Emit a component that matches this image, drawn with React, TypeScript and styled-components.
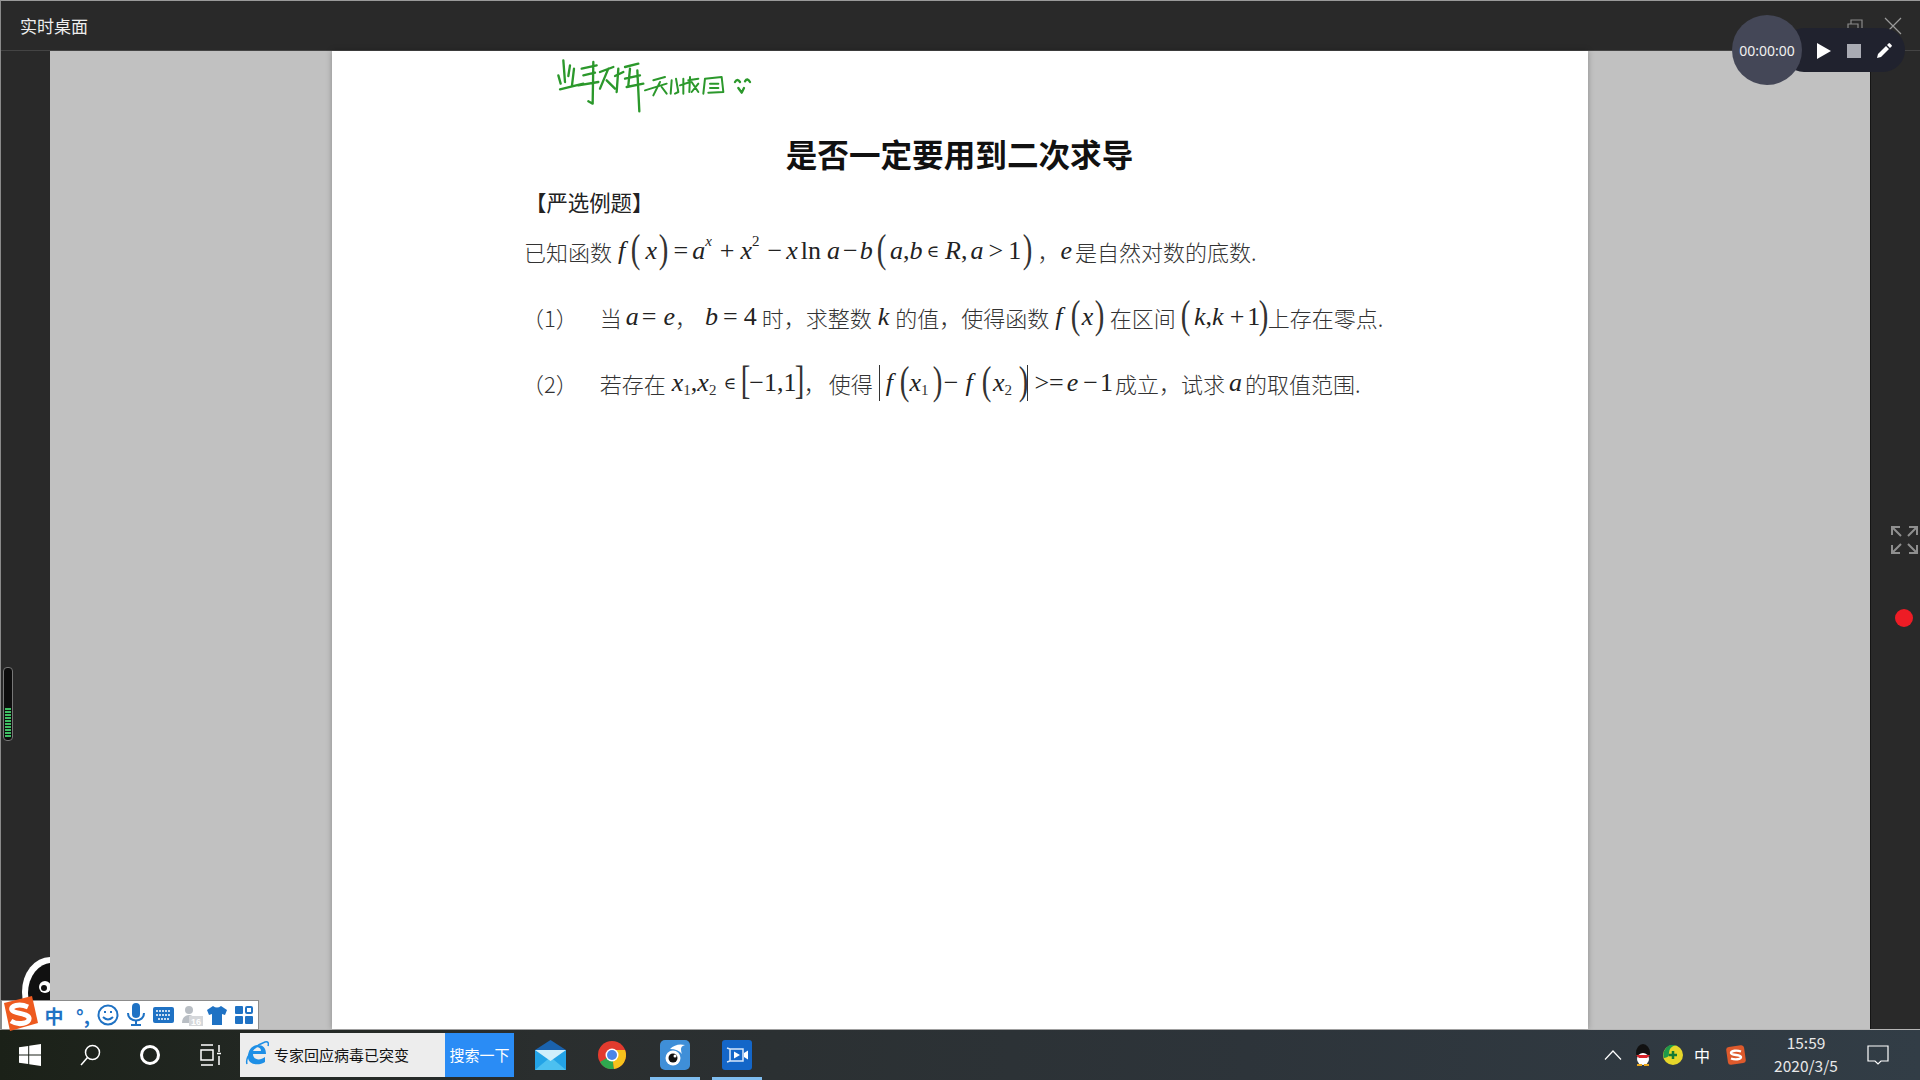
import React from 'react';
import styled, { createGlobalStyle } from 'styled-components';

const Global = createGlobalStyle`
  html, body { margin: 0; padding: 0; background: #292929; overflow: hidden; }
  #root { width: 1920px; height: 1080px; }
`;
const CJK = `"Noto Sans CJK SC", "Liberation Sans", sans-serif`;
const Screen = styled.div`position: relative; width: 1920px; height: 1080px; display: flex; flex-direction: column; overflow: hidden; font-family: ${CJK};`;
const Win = styled.div`height: 1030px; display: flex; flex-direction: column; background: #292929; border-top: 1px solid #9a9a9a; border-left: 1px solid #8a8a8a; border-bottom: 1px solid #b5b5b5; box-sizing: border-box;`;
const TitleBar = styled.div`height: 50px; flex: none; display: flex; align-items: center; padding-left: 19px; color: #eee; font-size: 17px; border-bottom: 1px solid #444; box-sizing: border-box;`;
const Body = styled.div`flex: 1; display: flex; min-height: 0;`;
const Rail = styled.div`width: 49px; flex: none; background: #292929;`;
const RightRail = styled.div`width: 50px; flex: none; background: #292929; border-left: 1px solid #151515; box-sizing: border-box;`;
const Viewer = styled.div`flex: 1; background: #c1c1c1; display: flex; justify-content: center; min-width: 0;`;
const Page = styled.div`width: 1256px; background: #fff; box-shadow: 0 0 6px rgba(0,0,0,.28); padding: 1px 0 0 192px; box-sizing: border-box; color: #222;`;
const Ink = styled.svg`display: block; width: 210px; height: 65px; margin-left: 26px;`;
const Title = styled.h1`margin: 14px 0 0; width: 870px; text-align: center; font-size: 31.6px; line-height: 44px; font-weight: 700; color: #111; padding-left: 1px; box-sizing: border-box;`;
const Tag = styled.div`margin: 10px 0 0 1px; font-size: 21.4px; line-height: 34px; color: #222;`;
const Line = styled.div<{ $top: number; $left?: number }>`
  display: flex; align-items: center; height: 44px; margin-top: ${p => p.$top}px; margin-left: ${p => p.$left ?? 0}px;
  white-space: nowrap; font-size: 22px; color: #333; font-weight: 300;
`;
const Gap = styled.span<{ $w: number }>`display: inline-block; flex: none; width: ${p => p.$w}px;`;
const I = styled.span<{ $g?: number }>`font-family: "Liberation Serif", serif; font-style: italic; font-size: 26px; color: #222; margin-left: ${p => p.$g ?? 0}px;`;
const R = styled.span<{ $g?: number }>`font-family: "Liberation Serif", serif; font-size: 26px; color: #222; margin-left: ${p => p.$g ?? 0}px;`;
const Elem = styled.span<{ $g?: number }>`font-family: "DejaVu Serif", serif; font-size: 17px; color: #222; margin-left: ${p => p.$g ?? 0}px;`;
const Big = styled.span<{ $g?: number; $r?: number }>`font-family: "Liberation Serif", serif; font-size: 40px; font-weight: 400; line-height: 40px; color: #333; display: inline-block; transform: scaleX(.72) translateY(-2px); margin: 0 ${p => p.$r ?? 0}px 0 ${p => p.$g ?? 0}px;`;
const Sup = styled.span<{ $g?: number; $i?: boolean }>`font-family: "Liberation Serif", serif; font-size: 15px; font-style: ${p => p.$i ? 'italic' : 'normal'}; color: #222; transform: translateY(-10px); margin-left: ${p => p.$g ?? 0}px;`;
const Sub = styled.span`font-family: "Liberation Serif", serif; font-size: 15px; color: #333; transform: translateY(7px);`;
const Bar = styled.span<{ $g?: number }>`display: inline-block; width: 1px; height: 36px; background: #333; margin-left: ${p => p.$g ?? 0}px;`;
const Task = styled.div`height: 50px; flex: none; display: flex; align-items: stretch; padding-right: 20px; background: linear-gradient(90deg, #1b2118 0%, #2a2e2e 28%, #2d343a 65%, #323d46 100%); color: #fff;`;
const TaskSlot = styled.div<{ $w: number; $on?: boolean }>`width: ${p => p.$w}px; flex: none; display: flex; align-items: center; justify-content: center; box-shadow: ${p => p.$on ? 'inset 0 -3px 0 #7fbdef' : 'none'};`;
const SearchBox = styled.div`width: 205px; margin: 3px 0; flex: none; display: flex; align-items: center; gap: 5px; background: #ededed; color: #111; font-size: 15px; padding: 0 0 2px 5px; box-sizing: border-box;`;
const SearchBtn = styled.div`width: 69px; margin: 3px 0; flex: none; background: #2a8cf5; color: #fff; font-size: 15px; display: flex; align-items: center; justify-content: center; padding-bottom: 2px; box-sizing: border-box;`;
const Spring = styled.div`flex: 1;`;
const Clock = styled.div`width: 100px; flex: none; text-align: center; font-size: 15.500px; line-height: 23px; color: #e8e8e8; align-self: center; padding-bottom: 2px; font-family: ${CJK};`;
const TrayZh = styled.span`font-size: 16px; color: #fff; font-family: ${CJK};`;
const Hud = styled.div`position: absolute; left: 1732px; top: 15px; height: 70px; width: 173px; display: flex; align-items: center;`;
const Pill = styled.div`position: absolute; left: 50px; top: 13px; width: 123px; height: 44px; border-radius: 22px; background: #20222e; display: flex; align-items: center; padding: 1px 0 0 35px; gap: 16px; box-sizing: border-box;`;
const Dial = styled.div`position: relative; z-index: 1; width: 70px; height: 70px; border-radius: 50%; background: #444757; color: #f0f0f0; font-size: 14px; display: flex; align-items: center; justify-content: center; padding-top: 1px; box-sizing: border-box; font-family: "Noto Sans", sans-serif;`;
const Stop = styled.span`width: 14px; height: 14px; background: #a9abb3;`;
const WinGlyph = styled.svg<{ $l: number }>`position: absolute; left: ${p => p.$l}px; top: 17px; width: 18px; height: 18px;`;
const Expand = styled.svg`position: absolute; left: 1891px; top: 526px; width: 27px; height: 28px;`;
const Rec = styled.div`position: absolute; left: 1895px; top: 609px; width: 18px; height: 18px; border-radius: 50%; background: #ee1c25;`;
const Meter = styled.div`position: absolute; left: 3px; top: 667px; width: 10px; height: 74px; border: 1px solid #777; border-radius: 4px; background: #0d0d0d; box-sizing: border-box; display: flex; flex-direction: column; justify-content: flex-end; gap: 1px; padding: 0 1px 3px;`;
const Tick = styled.span`height: 2px; background: #3fbf63; flex: none;`;
const Panda = styled.svg`position: absolute; left: 0; top: 950px; width: 50px; height: 60px;`;
const Ime = styled.div`position: absolute; left: 1px; top: 1000px; width: 258px; height: 30px; background: #fff; border: 1px solid #8c8c8c; box-sizing: border-box; display: flex; align-items: center;`;
const ImeS = styled.svg`position: absolute; left: 1px; top: 996px; width: 37px; height: 35px;`;
const ImeItem = styled.span<{ $x: number }>`position: absolute; left: ${p => p.$x}px; top: 2px; width: 26px; height: 24px; display: flex; align-items: center; justify-content: center; color: #1f72c4; font-size: 19px; font-weight: 700;`;

const Signature = () => (
  <Ink viewBox="0 0 630 195" fill="none" stroke="#2b982b" strokeWidth="7" strokeLinecap="round" strokeLinejoin="round" role="img" aria-label="手写签名">
    <path d="M40 25 45 90M25 70 32 95M60 40 55 72M30 112 100 95M72 50 66 100" />
    <path d="M95 50 140 40M130 30 128 155 115 148M85 100 145 90M100 70 135 62" />
    <path d="M150 60 190 45M175 50 150 110M170 85 195 110" />
    <path d="M205 50 200 120M195 72 220 60M262 55 268 178M225 45 265 35M225 80 270 70M230 105 280 95M240 50 235 100" />
    <path d="M285 115 350 95M310 85 345 75M330 90 310 130M335 105 350 125" strokeWidth="6" />
    <path d="M365 85 362 125M378 80 385 120 375 125M400 80 400 125M390 100 420 90M420 75 418 120M415 85 445 80M425 90 445 120M445 95 425 120" strokeWidth="6" />
    <path d="M465 80 460 125M465 80 515 75 520 120 475 122M480 95 505 95M480 108 505 108" strokeWidth="6" />
    <path d="M555 90Q562 78 570 90M585 88Q592 76 600 90M565 108 575 122 582 108" />
  </Ink>
);

const App = () => (
  <Screen>
    <Global />
    <Win>
      <TitleBar>实时桌面</TitleBar>
      <Body>
        <Rail />
        <Viewer>
          <Page>
            <Signature />
            <Title>是否一定要用到二次求导</Title>
            <Tag>【严选例题】</Tag>
            <Line $top={10}>
              已知函数<I $g={6}>f</I><Big $g={4}>(</Big><I $g={3}>x</I><Big>)</Big><R $g={3}>=</R><I $g={4}>a</I><Sup $i>x</Sup><R $g={8}>+</R><I $g={6}>x</I><Sup>2</Sup><R $g={8}>−</R><I $g={4}>x</I><R $g={3}>ln</R><I $g={6}>a</I><R $g={3}>−</R><I $g={2}>b</I><Big $g={2}>(</Big><I $g={2}>a</I><R>,</R><I>b</I><Elem $g={4}>∈</Elem><I $g={6}>R</I><R>,</R><I $g={3}>a</I><R $g={5}>&gt;</R><R $g={5}>1</R><Big>)</Big><Gap $w={3} />，<Gap $w={1} /><I>e</I><Gap $w={3} />是自然对数的底数.
            </Line>
            <Line $top={22} $left={-2}>
              （1）<Gap $w={22} />当<I $g={4}>a</I><R $g={3}>=</R><I $g={7}>e</I>，<Gap $w={8} /><I>b</I><R $g={5}>=</R><R $g={6}>4</R><Gap $w={5} />时，求整数<I $g={6}>k</I><Gap $w={6} />的值，使得函数<I $g={6}>f</I><Big $g={6}>(</Big><I>x</I><Big>)</Big><Gap $w={3} />在区间<Big $g={3}>(</Big><I $g={2}>k</I><R>,</R><I>k</I><R $g={6}>+</R><R $g={3}>1</R><Big $g={-3} $r={-3}>)</Big>上存在零点.
            </Line>
            <Line $top={22} $left={-2}>
              （2）<Gap $w={22} />若存在<I $g={6}>x</I><Sub>1</Sub><R>,</R><I>x</I><Sub>2</Sub><Elem $g={7}>∈</Elem><Big $g={3} $r={-3}>[</Big><R>−1,1</R><Big $g={-3} $r={-3}>]</Big>，<Gap $w={3} />使得<Bar $g={6} /><I $g={6}>f</I><Big $g={5} $r={-2}>(</Big><I>x</I><Sub>1</Sub><Big $g={3} $r={-2}>)</Big><R $g={1}>−</R><I $g={7}>f</I><Big $g={7}>(</Big><I>x</I><Sub>2</Sub><Big $g={5} $r={-3}>)</Big><Bar /><R $g={6}>&gt;=</R><I $g={3}>e</I><R $g={5}>−</R><R $g={2}>1</R><Gap $w={2} />成立，试求<I $g={4}>a</I><Gap $w={3} />的取值范围.
            </Line>
          </Page>
        </Viewer>
        <RightRail />
      </Body>
    </Win>
    <Task>
      <TaskSlot $w={60}>
        <svg width="22" height="22" viewBox="0 0 22 22" fill="#fff"><path d="M0 3.2 9.2 2v8.4H0zM10.2 1.8 22 0v10.400H10.200zM0 11.600h9.200V20L0 18.800zM10.200 11.600H22V22l-11.800-1.800z" /></svg>
      </TaskSlot>
      <TaskSlot $w={60}>
        <svg width="24" height="24" viewBox="0 0 24 24" fill="none" stroke="#fff" strokeWidth="1.500"><circle cx="14.500" cy="9.500" r="7" /><path d="M9.500 14.500 3 22" /></svg>
      </TaskSlot>
      <TaskSlot $w={60}>
        <svg width="22" height="22" viewBox="0 0 22 22" fill="none" stroke="#fff" strokeWidth="3"><circle cx="11" cy="11" r="8.500" /></svg>
      </TaskSlot>
      <TaskSlot $w={60}>
        <svg width="24" height="24" viewBox="0 0 24 24" fill="none" stroke="#fff" strokeWidth="1.500"><path d="M3 2h12M3 22h12M3 7h12v10H3zM21 2v7M21 13v9M19 10.500h4" /></svg>
      </TaskSlot>
      <SearchBox>
        <svg width="24" height="28" viewBox="0 0 24 28"><path d="M3 17c0-7 4-12 10-12 5 0 8 3 8 9H8c0 6 7 7 12 3v5c-6 4-17 3-17-5zm5-6h8c0-5-7-5-8 0z" fill="#1e8fe6" /><path d="M2 24C0 18 8 6 20 2c3-1 4 1 3 4" fill="none" stroke="#1e8fe6" strokeWidth="1.500" /></svg>
        专家回应病毒已突变
      </SearchBox>
      <SearchBtn>搜索一下</SearchBtn>
      <TaskSlot $w={73}>
        <svg width="31" height="30" viewBox="0 0 31 30"><path d="M0 10 15.500 0 31 10v20H0z" fill="#1a62ad" /><path d="M0 10h31v20H0z" fill="#23a3e6" /><path d="M0 30 15.500 17 31 30z" fill="#4cc0f0" /><path d="M0 10l15.500 11L31 10z" fill="#cfeefb" /></svg>
      </TaskSlot>
      <TaskSlot $w={50}>
        <svg width="28" height="28" viewBox="0 0 28 28"><circle cx="14" cy="14" r="14" fill="#e33b2e" /><path d="M14 14 2 21a14 14 0 0 0 14 7z" fill="#2fa84f" /><path d="M14 14 16 28A14 14 0 0 0 27 9H14z" fill="#f6c21c" /><circle cx="14" cy="14" r="6.500" fill="#fff" /><circle cx="14" cy="14" r="5" fill="#4a86e8" /></svg>
      </TaskSlot>
      <TaskSlot $w={13} />
      <TaskSlot $w={50} $on>
        <svg width="30" height="30" viewBox="0 0 30 30"><rect width="30" height="30" rx="5" fill="#3f8fd8" /><circle cx="13" cy="18" r="7.500" fill="#fff" /><circle cx="13" cy="18" r="4.500" fill="#111" /><circle cx="15" cy="16" r="1.500" fill="#fff" /><path d="M10 9Q16 3 25 5q-4 1-4 4Q21 12 22 14 18 9 10 9z" fill="#fff" /></svg>
      </TaskSlot>
      <TaskSlot $w={12} />
      <TaskSlot $w={50} $on>
        <svg width="30" height="30" viewBox="0 0 30 30"><rect width="30" height="30" rx="3" fill="#1466c8" /><path d="M5 8l3 1v12l-3 1M8 9h13v12H8" fill="none" stroke="#d8e8fa" strokeWidth="1.500" /><path d="M12 11.500l6 3.500-6 3.500zM22 13l4-2.500v9L22 17z" fill="#fff" /></svg>
      </TaskSlot>
      <Spring />
      <TaskSlot $w={30}>
        <svg width="18" height="10" viewBox="0 0 18 10" fill="none" stroke="#fff" strokeWidth="1.200"><path d="M1 9.500 9 1l8 8.500" /></svg>
      </TaskSlot>
      <TaskSlot $w={30}>
        <svg width="20" height="22" viewBox="0 0 20 22"><ellipse cx="10" cy="9" rx="7" ry="9" fill="#111" /><ellipse cx="10" cy="15" rx="6" ry="6" fill="#fff" /><path d="M3 11h14l-3 3H6z" fill="#d8232a" /><path d="M4 21h5M11 21h5" stroke="#e6a51c" strokeWidth="2" /></svg>
      </TaskSlot>
      <TaskSlot $w={30}>
        <svg width="20" height="20" viewBox="0 0 20 20"><circle cx="10" cy="10" r="10" fill="#e6d62a" /><path d="M1 13A10 10 0 0 1 13 0q-8 2-7 10 0 2-5 3z" fill="#1f9a4a" /><path d="M10 6v8M6 10h8" stroke="#147a34" strokeWidth="2.500" /></svg>
      </TaskSlot>
      <TaskSlot $w={28}><TrayZh>中</TrayZh></TaskSlot>
      <TaskSlot $w={40}>
        <svg width="20" height="20" viewBox="0 0 20 20"><rect x="1" y="1" width="18" height="18" rx="3" fill="#de5a2c" transform="rotate(-8 10 10)" /><path d="M15 6.500C11 5 5 5.500 5 8s10 1.500 10 4-6 3-10 1.500" fill="none" stroke="#fff" strokeWidth="2.400" /></svg>
      </TaskSlot>
      <Clock>15:59<br />2020/3/5</Clock>
      <TaskSlot $w={44}>
        <svg width="22" height="20" viewBox="0 0 22 20" fill="none" stroke="#fff" strokeWidth="1.200"><path d="M1 1h20v15h-7l-3 3-3-3H1z" /></svg>
      </TaskSlot>
    </Task>

    <WinGlyph $l={1846} viewBox="0 0 18 18" fill="none" stroke="#8a8a8a" strokeWidth="1.200"><path d="M2 7h10v9H2zM5 7V3h11v9h-4" /></WinGlyph>
    <WinGlyph $l={1884} viewBox="0 0 18 18" fill="none" stroke="#9a9a9a" strokeWidth="1.200"><path d="M1 1l16 16M17 1 1 17" /></WinGlyph>
    <Hud>
      <Pill>
        <svg width="14" height="16" viewBox="0 0 14 16"><path d="M0 0l14 8-14 8z" fill="#fff" /></svg>
        <Stop />
        <svg width="15" height="15" viewBox="0 0 15 15"><path d="M0 15l1-4 8-8 3 3-8 8zM10 2l1.500-1.500a1 1 0 0 1 1.500 0l1.500 1.500a1 1 0 0 1 0 1.500L13 5z" fill="#fff" /></svg>
      </Pill>
      <Dial>00:00:00</Dial>
    </Hud>
    <Expand viewBox="0 0 27 28" fill="none" stroke="#8f8f8f" strokeWidth="2"><path d="M1 9V1h8M1 1l9 9M26 9V1h-8M26 1l-9 9M1 19v8h8M1 27l9-9M26 19v8h-8M26 27l-9-9" /></Expand>
    <Rec />
    <Meter>{Array.from({ length: 10 }).map((_, i) => <Tick key={i} />)}</Meter>
    <Panda viewBox="0 0 50 60"><ellipse cx="50" cy="42" rx="28" ry="35" fill="#fff" /><ellipse cx="52" cy="43" rx="24" ry="30" fill="#111" /><circle cx="45" cy="37" r="6" fill="#fff" /><circle cx="44" cy="38" r="3" fill="#111" /></Panda>
    <Ime>
      <ImeItem $x={39}>中</ImeItem>
      <ImeItem $x={68}>°,</ImeItem>
      <ImeItem $x={93}><svg width="22" height="22" viewBox="0 0 22 22" fill="none" stroke="#1f72c4" strokeWidth="2"><circle cx="11" cy="11" r="9.500" /><path d="M6 13q5 5 10 0" /><path d="M8 7v2M14 7v2" /></svg></ImeItem>
      <ImeItem $x={121}><svg width="18" height="24" viewBox="0 0 18 24" fill="#1f72c4"><rect x="5" y="0" width="8" height="15" rx="4" /><path d="M1 10c0 10 16 10 16 0" fill="none" stroke="#1f72c4" strokeWidth="2" /><path d="M8 17h2v4h4v2H4v-2h4z" /></svg></ImeItem>
      <ImeItem $x={148}><svg width="21" height="16" viewBox="0 0 21 16"><rect width="21" height="16" rx="2" fill="#1f72c4" /><path d="M3 4h15M3 8h15M5 12h11" stroke="#fff" strokeWidth="1.500" strokeDasharray="2 1" /></svg></ImeItem>
      <ImeItem $x={177}><svg width="22" height="21" viewBox="0 0 22 21"><circle cx="8" cy="5" r="4" fill="#b9bec4" /><path d="M1 18c0-10 12-10 13-3v3z" fill="#b9bec4" /><rect x="8" y="11" width="14" height="10" fill="#d5d7da" /><text x="15" y="20" fontSize="9" fontWeight="700" fill="#fff" textAnchor="middle" fontFamily="Liberation Sans">16</text></svg></ImeItem>
      <ImeItem $x={202}><svg width="20" height="20" viewBox="0 0 20 20" fill="#1f72c4"><path d="M6 1 0 5l2 5 3-1v11h10V9l3 1 2-5-6-4q-4 3-8 0z" /></svg></ImeItem>
      <ImeItem $x={229}><svg width="18" height="18" viewBox="0 0 18 18" fill="#1f72c4"><rect width="8" height="8" rx="1" /><rect x="11" y="1" width="6" height="6" rx="1" fill="none" stroke="#1f72c4" strokeWidth="2" /><rect y="10" width="8" height="8" rx="1" /><rect x="10" y="10" width="8" height="8" rx="1" /></svg></ImeItem>
    </Ime>
    <ImeS viewBox="0 0 37 35"><path d="M3 7 31 0l6 27-28 8z" fill="#ee5a1f" /><path d="M27 11C18 7 9 10 11 14s16 3 17 8-10 8-18 3" fill="none" stroke="#fff" strokeWidth="5" /></ImeS>
  </Screen>
);
export default App;
